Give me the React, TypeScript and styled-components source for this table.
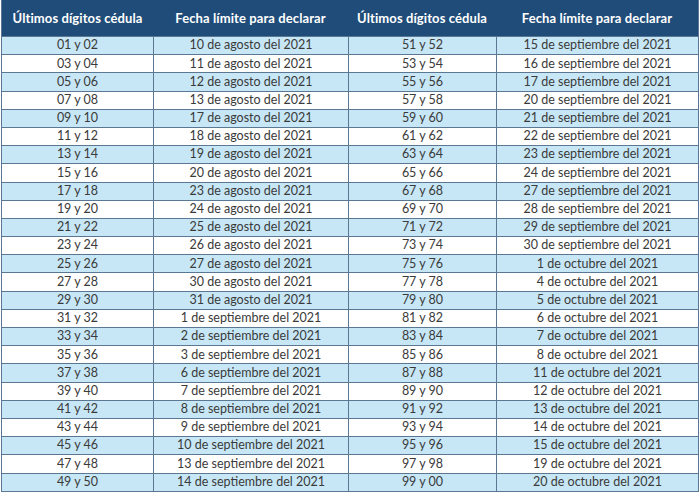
import React from "react";
import styled, { createGlobalStyle } from "styled-components";

const GlobalStyle = createGlobalStyle`
	html, body {
		margin: 0;
		padding: 0;
		background: #ffffff;
	}
	body {
		font-family: "Lato", "Open Sans", sans-serif;
	}
`;

const left: [string, string][] = [
	["01 y 02", "10 de agosto del 2021"],
	["03 y 04", "11 de agosto del 2021"],
	["05 y 06", "12 de agosto del 2021"],
	["07 y 08", "13 de agosto del 2021"],
	["09 y 10", "17 de agosto del 2021"],
	["11 y 12", "18 de agosto del 2021"],
	["13 y 14", "19 de agosto del 2021"],
	["15 y 16", "20 de agosto del 2021"],
	["17 y 18", "23 de agosto del 2021"],
	["19 y 20", "24 de agosto del 2021"],
	["21 y 22", "25 de agosto del 2021"],
	["23 y 24", "26 de agosto del 2021"],
	["25 y 26", "27 de agosto del 2021"],
	["27 y 28", "30 de agosto del 2021"],
	["29 y 30", "31 de agosto del 2021"],
	["31 y 32", "1 de septiembre del 2021"],
	["33 y 34", "2 de septiembre del 2021"],
	["35 y 36", "3 de septiembre del 2021"],
	["37 y 38", "6 de septiembre del 2021"],
	["39 y 40", "7 de septiembre del 2021"],
	["41 y 42", "8 de septiembre del 2021"],
	["43 y 44", "9 de septiembre del 2021"],
	["45 y 46", "10 de septiembre del 2021"],
	["47 y 48", "13 de septiembre del 2021"],
	["49 y 50", "14 de septiembre del 2021"],
];

const right: [string, string][] = [
	["51 y 52", "15 de septiembre del 2021"],
	["53 y 54", "16 de septiembre del 2021"],
	["55 y 56", "17 de septiembre del 2021"],
	["57 y 58", "20 de septiembre del 2021"],
	["59 y 60", "21 de septiembre del 2021"],
	["61 y 62", "22 de septiembre del 2021"],
	["63 y 64", "23 de septiembre del 2021"],
	["65 y 66", "24 de septiembre del 2021"],
	["67 y 68", "27 de septiembre del 2021"],
	["69 y 70", "28 de septiembre del 2021"],
	["71 y 72", "29 de septiembre del 2021"],
	["73 y 74", "30 de septiembre del 2021"],
	["75 y 76", "1 de octubre del 2021"],
	["77 y 78", "4 de octubre del 2021"],
	["79 y 80", "5 de octubre del 2021"],
	["81 y 82", "6 de octubre del 2021"],
	["83 y 84", "7 de octubre del 2021"],
	["85 y 86", "8 de octubre del 2021"],
	["87 y 88", "11 de octubre del 2021"],
	["89 y 90", "12 de octubre del 2021"],
	["91 y 92", "13 de octubre del 2021"],
	["93 y 94", "14 de octubre del 2021"],
	["95 y 96", "15 de octubre del 2021"],
	["97 y 98", "19 de octubre del 2021"],
	["99 y 00", "20 de octubre del 2021"],
];

const headers = [
	"Últimos dígitos cédula",
	"Fecha límite para declarar",
	"Últimos dígitos cédula",
	"Fecha límite para declarar",
];

const App: React.FC = () => {
	return (
		<>
			<GlobalStyle />
			<Table>
				<HeadRow>
					{headers.map((h, i) => (
						<HeadCell key={i}>{h}</HeadCell>
					))}
				</HeadRow>
				{left.map((row, i) => (
					<Row key={i} $shaded={i % 2 === 0}>
						<Cell>{row[0]}</Cell>
						<Cell>{row[1]}</Cell>
						<Cell>{right[i][0]}</Cell>
						<Cell>{right[i][1]}</Cell>
					</Row>
				))}
			</Table>
		</>
	);
};

export default App;

const columns = "151px 195px 148px 1fr";

const Table = styled.div`
	width: 698px;
	margin-left: 1px;
	display: flex;
	flex-direction: column;
	border-left: 1px solid #5a7894;
	border-right: 1px solid #5a7894;
	border-bottom: 1px solid #5a7894;
	box-sizing: border-box;
`;

const HeadRow = styled.div`
	display: grid;
	grid-template-columns: ${columns};
	height: 36px;
	background: #1f4c79;
	align-items: center;
`;

const HeadCell = styled.div`
	color: #ffffff;
	font-weight: 700;
	font-size: 13px;
	text-align: center;
	white-space: nowrap;
	letter-spacing: 0.1px;
`;

const Row = styled.div<{ $shaded: boolean }>`
	display: grid;
	grid-template-columns: ${columns};
	height: 18.2px;
	background: ${(p) => (p.$shaded ? "#c7e7f6" : "#ffffff")};
	border-top: 1px solid #5a7894;
	box-sizing: border-box;
`;

const Cell = styled.div`
	display: flex;
	align-items: center;
	justify-content: center;
	color: #3a3a3a;
	font-size: 12.5px;
	line-height: 1;
	white-space: nowrap;
	border-left: 1px solid #5a7894;
	&:first-child {
		border-left: none;
	}
`;
